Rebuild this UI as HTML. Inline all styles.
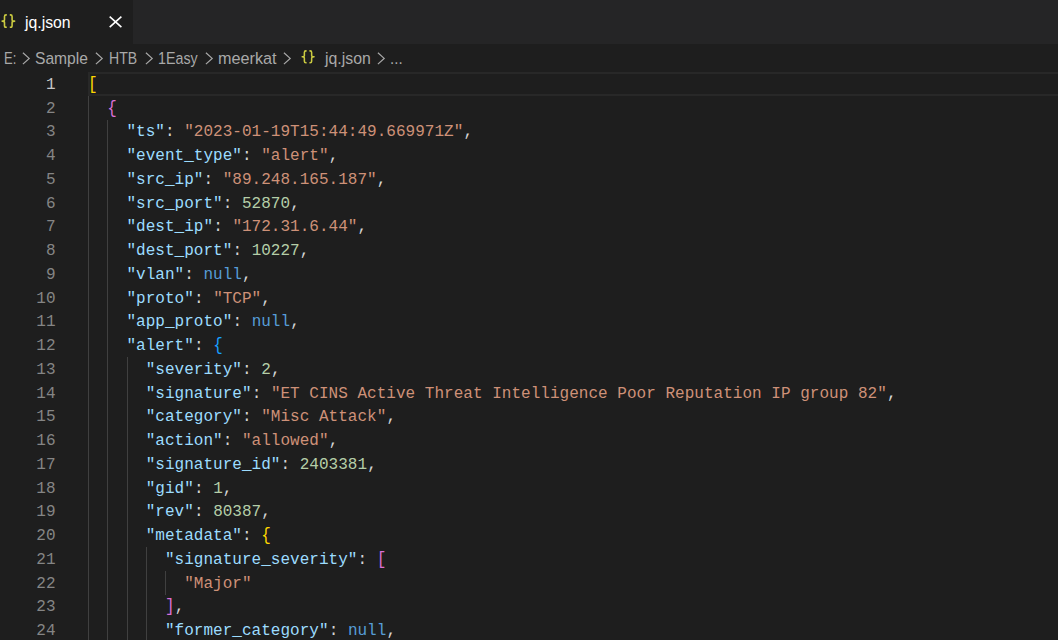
<!DOCTYPE html>
<html><head><meta charset="utf-8"><style>
html,body{margin:0;padding:0;}
body{width:1058px;height:640px;overflow:hidden;background:#1e1e1e;position:relative;font-family:"Liberation Sans",sans-serif;}
.tabbar{position:absolute;left:0;top:0;width:1058px;height:44px;background:#252526;}
.tab{position:absolute;left:0;top:0;width:133px;height:44px;background:#1e1e1e;}
.tab .name{position:absolute;left:25px;top:13.2px;font-size:15.5px;color:#ffffff;line-height:20px;white-space:pre;}
.bc{position:absolute;top:44px;left:0;height:28px;width:1058px;background:#1e1e1e;color:#a9a9a9;font-size:15px;}
.bc span{position:absolute;top:4px;line-height:20px;white-space:pre;}
.ln{position:absolute;left:0;width:55.5px;text-align:right;font-family:"Liberation Mono",monospace;font-size:16px;color:#858585;white-space:pre;}
.code{position:absolute;left:88.0px;font-family:"Liberation Mono",monospace;font-size:16px;letter-spacing:0.0234px;white-space:pre;color:#d4d4d4;}
.g{position:absolute;width:1px;background:#404040;}
.b1,.b2,.b3{display:inline-block;transform:scaleY(1.12);}
.hl{position:absolute;left:88px;top:72px;width:1000px;height:20px;border:2px solid #282828;}
.key{color:#9cdcfe}
.str{color:#ce9178}
.num{color:#b5cea8}
.null{color:#569cd6}
.p{color:#d4d4d4}
.b1{color:#ffd700}
.b2{color:#da70d6}
.b3{color:#179fff}
</style></head><body>
<div class="tabbar"><div class="tab"></div></div>
<svg style="position:absolute;left:1.30px;top:13.80px" width="15.2" height="14.4" viewBox="0 0 15.2 14.4"><path d="M5.8 0.9 H5.1 Q3.5 0.9 3.5 2.5 V5.7 Q3.5 7.15 1.2 7.15 Q3.5 7.15 3.5 8.6 V11.8 Q3.5 13.4 5.1 13.4 H5.8 M8.8 0.9 H9.5 Q11.1 0.9 11.1 2.5 V5.7 Q11.1 7.15 13.6 7.15 Q11.1 7.15 11.1 8.6 V11.8 Q11.1 13.4 9.5 13.4 H8.8" stroke="#cbcb41" stroke-width="1.60" fill="none" stroke-linejoin="round"/></svg><span style="position:absolute;left:25.19px;top:13.30px;font-size:16px;line-height:20px;white-space:pre;color:#ffffff;transform-origin:0 15px;transform:scale(0.9851,1.000)">jq.json</span><svg style="position:absolute;left:109px;top:16px" width="14" height="12" viewBox="0 0 14 12"><path d="M0.7 0.6 L12.4 11.1 M12.4 0.6 L0.7 11.1" stroke="#ffffff" stroke-width="1.6" fill="none"/></svg>
<span style="position:absolute;left:4.06px;top:49.00px;font-size:15.5px;line-height:20px;white-space:pre;color:#a9a9a9;transform-origin:0 15px;transform:scale(0.8385,1.070)">E:</span><span style="position:absolute;left:35.29px;top:49.00px;font-size:15.5px;line-height:20px;white-space:pre;color:#a9a9a9;transform-origin:0 15px;transform:scale(1.0078,1.070)">Sample</span><span style="position:absolute;left:108.79px;top:49.00px;font-size:15.5px;line-height:20px;white-space:pre;color:#a9a9a9;transform-origin:0 15px;transform:scale(0.9067,1.070)">HTB</span><span style="position:absolute;left:158.08px;top:49.00px;font-size:15.5px;line-height:20px;white-space:pre;color:#a9a9a9;transform-origin:0 15px;transform:scale(0.9214,1.070)">1Easy</span><span style="position:absolute;left:217.75px;top:49.00px;font-size:15.5px;line-height:20px;white-space:pre;color:#a9a9a9;transform-origin:0 15px;transform:scale(1.0455,1.070)">meerkat</span><span style="position:absolute;left:325.02px;top:49.00px;font-size:15.5px;line-height:20px;white-space:pre;color:#a9a9a9;transform-origin:0 15px;transform:scale(1.0222,1.070)">jq.json</span><span style="position:absolute;left:390.03px;top:49.00px;font-size:15.5px;line-height:20px;white-space:pre;color:#a9a9a9;transform-origin:0 15px;transform:scale(0.9727,1.070)">...</span><svg style="position:absolute;left:22.10px;top:51.5px" width="9" height="13" viewBox="0 0 9 13"><path d="M0.9 0.7 L7.2 6.4 L0.9 12.1" stroke="#a9a9a9" stroke-width="1.2" fill="none"/></svg><svg style="position:absolute;left:95.30px;top:51.5px" width="9" height="13" viewBox="0 0 9 13"><path d="M0.9 0.7 L7.2 6.4 L0.9 12.1" stroke="#a9a9a9" stroke-width="1.2" fill="none"/></svg><svg style="position:absolute;left:144.50px;top:51.5px" width="9" height="13" viewBox="0 0 9 13"><path d="M0.9 0.7 L7.2 6.4 L0.9 12.1" stroke="#a9a9a9" stroke-width="1.2" fill="none"/></svg><svg style="position:absolute;left:205.20px;top:51.5px" width="9" height="13" viewBox="0 0 9 13"><path d="M0.9 0.7 L7.2 6.4 L0.9 12.1" stroke="#a9a9a9" stroke-width="1.2" fill="none"/></svg><svg style="position:absolute;left:283.00px;top:51.5px" width="9" height="13" viewBox="0 0 9 13"><path d="M0.9 0.7 L7.2 6.4 L0.9 12.1" stroke="#a9a9a9" stroke-width="1.2" fill="none"/></svg><svg style="position:absolute;left:377.30px;top:51.5px" width="9" height="13" viewBox="0 0 9 13"><path d="M0.9 0.7 L7.2 6.4 L0.9 12.1" stroke="#a9a9a9" stroke-width="1.2" fill="none"/></svg><svg style="position:absolute;left:301.30px;top:50.00px" width="14.6" height="13.8" viewBox="0 0 15.2 14.4"><path d="M5.8 0.9 H5.1 Q3.5 0.9 3.5 2.5 V5.7 Q3.5 7.15 1.2 7.15 Q3.5 7.15 3.5 8.6 V11.8 Q3.5 13.4 5.1 13.4 H5.8 M8.8 0.9 H9.5 Q11.1 0.9 11.1 2.5 V5.7 Q11.1 7.15 13.6 7.15 Q11.1 7.15 11.1 8.6 V11.8 Q11.1 13.4 9.5 13.4 H8.8" stroke="#cbcb41" stroke-width="1.60" fill="none" stroke-linejoin="round"/></svg>
<div class="hl"></div>
<div class="g" style="left:88.00px;top:95.75px;height:546.25px"></div><div class="g" style="left:107.25px;top:119.50px;height:522.50px"></div><div class="g" style="left:126.50px;top:357.00px;height:285.00px"></div><div class="g" style="left:145.75px;top:547.00px;height:95.00px"></div><div class="g" style="left:165.00px;top:570.75px;height:23.75px"></div>
<div class="ln" style="top:73.80px;line-height:23.75px;color:#c6c6c6">1</div><div class="code" style="top:73.80px;line-height:23.75px"><span class="b1">[</span></div>
<div class="ln" style="top:97.55px;line-height:23.75px;color:#858585">2</div><div class="code" style="top:97.55px;line-height:23.75px">  <span class="b2">{</span></div>
<div class="ln" style="top:121.30px;line-height:23.75px;color:#858585">3</div><div class="code" style="top:121.30px;line-height:23.75px">    <span class="key">&quot;ts&quot;</span><span class="p">: </span><span class="str">&quot;2023-01-19T15:44:49.669971Z&quot;</span><span class="p">,</span></div>
<div class="ln" style="top:145.05px;line-height:23.75px;color:#858585">4</div><div class="code" style="top:145.05px;line-height:23.75px">    <span class="key">&quot;event_type&quot;</span><span class="p">: </span><span class="str">&quot;alert&quot;</span><span class="p">,</span></div>
<div class="ln" style="top:168.80px;line-height:23.75px;color:#858585">5</div><div class="code" style="top:168.80px;line-height:23.75px">    <span class="key">&quot;src_ip&quot;</span><span class="p">: </span><span class="str">&quot;89.248.165.187&quot;</span><span class="p">,</span></div>
<div class="ln" style="top:192.55px;line-height:23.75px;color:#858585">6</div><div class="code" style="top:192.55px;line-height:23.75px">    <span class="key">&quot;src_port&quot;</span><span class="p">: </span><span class="num">52870</span><span class="p">,</span></div>
<div class="ln" style="top:216.30px;line-height:23.75px;color:#858585">7</div><div class="code" style="top:216.30px;line-height:23.75px">    <span class="key">&quot;dest_ip&quot;</span><span class="p">: </span><span class="str">&quot;172.31.6.44&quot;</span><span class="p">,</span></div>
<div class="ln" style="top:240.05px;line-height:23.75px;color:#858585">8</div><div class="code" style="top:240.05px;line-height:23.75px">    <span class="key">&quot;dest_port&quot;</span><span class="p">: </span><span class="num">10227</span><span class="p">,</span></div>
<div class="ln" style="top:263.80px;line-height:23.75px;color:#858585">9</div><div class="code" style="top:263.80px;line-height:23.75px">    <span class="key">&quot;vlan&quot;</span><span class="p">: </span><span class="null">null</span><span class="p">,</span></div>
<div class="ln" style="top:287.55px;line-height:23.75px;color:#858585">10</div><div class="code" style="top:287.55px;line-height:23.75px">    <span class="key">&quot;proto&quot;</span><span class="p">: </span><span class="str">&quot;TCP&quot;</span><span class="p">,</span></div>
<div class="ln" style="top:311.30px;line-height:23.75px;color:#858585">11</div><div class="code" style="top:311.30px;line-height:23.75px">    <span class="key">&quot;app_proto&quot;</span><span class="p">: </span><span class="null">null</span><span class="p">,</span></div>
<div class="ln" style="top:335.05px;line-height:23.75px;color:#858585">12</div><div class="code" style="top:335.05px;line-height:23.75px">    <span class="key">&quot;alert&quot;</span><span class="p">: </span><span class="b3">{</span></div>
<div class="ln" style="top:358.80px;line-height:23.75px;color:#858585">13</div><div class="code" style="top:358.80px;line-height:23.75px">      <span class="key">&quot;severity&quot;</span><span class="p">: </span><span class="num">2</span><span class="p">,</span></div>
<div class="ln" style="top:382.55px;line-height:23.75px;color:#858585">14</div><div class="code" style="top:382.55px;line-height:23.75px">      <span class="key">&quot;signature&quot;</span><span class="p">: </span><span class="str">&quot;ET CINS Active Threat Intelligence Poor Reputation IP group 82&quot;</span><span class="p">,</span></div>
<div class="ln" style="top:406.30px;line-height:23.75px;color:#858585">15</div><div class="code" style="top:406.30px;line-height:23.75px">      <span class="key">&quot;category&quot;</span><span class="p">: </span><span class="str">&quot;Misc Attack&quot;</span><span class="p">,</span></div>
<div class="ln" style="top:430.05px;line-height:23.75px;color:#858585">16</div><div class="code" style="top:430.05px;line-height:23.75px">      <span class="key">&quot;action&quot;</span><span class="p">: </span><span class="str">&quot;allowed&quot;</span><span class="p">,</span></div>
<div class="ln" style="top:453.80px;line-height:23.75px;color:#858585">17</div><div class="code" style="top:453.80px;line-height:23.75px">      <span class="key">&quot;signature_id&quot;</span><span class="p">: </span><span class="num">2403381</span><span class="p">,</span></div>
<div class="ln" style="top:477.55px;line-height:23.75px;color:#858585">18</div><div class="code" style="top:477.55px;line-height:23.75px">      <span class="key">&quot;gid&quot;</span><span class="p">: </span><span class="num">1</span><span class="p">,</span></div>
<div class="ln" style="top:501.30px;line-height:23.75px;color:#858585">19</div><div class="code" style="top:501.30px;line-height:23.75px">      <span class="key">&quot;rev&quot;</span><span class="p">: </span><span class="num">80387</span><span class="p">,</span></div>
<div class="ln" style="top:525.05px;line-height:23.75px;color:#858585">20</div><div class="code" style="top:525.05px;line-height:23.75px">      <span class="key">&quot;metadata&quot;</span><span class="p">: </span><span class="b1">{</span></div>
<div class="ln" style="top:548.80px;line-height:23.75px;color:#858585">21</div><div class="code" style="top:548.80px;line-height:23.75px">        <span class="key">&quot;signature_severity&quot;</span><span class="p">: </span><span class="b2">[</span></div>
<div class="ln" style="top:572.55px;line-height:23.75px;color:#858585">22</div><div class="code" style="top:572.55px;line-height:23.75px">          <span class="str">&quot;Major&quot;</span></div>
<div class="ln" style="top:596.30px;line-height:23.75px;color:#858585">23</div><div class="code" style="top:596.30px;line-height:23.75px">        <span class="b2">]</span><span class="p">,</span></div>
<div class="ln" style="top:620.05px;line-height:23.75px;color:#858585">24</div><div class="code" style="top:620.05px;line-height:23.75px">        <span class="key">&quot;former_category&quot;</span><span class="p">: </span><span class="null">null</span><span class="p">,</span></div>
</body></html>
